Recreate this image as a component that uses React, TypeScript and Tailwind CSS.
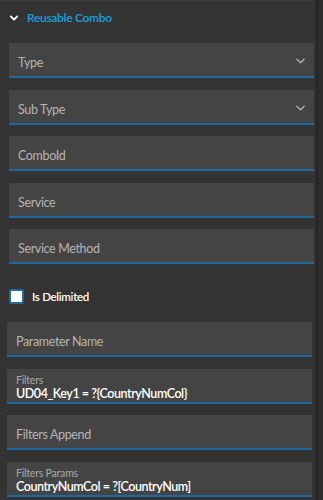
import { useState } from "react";

const font = { fontFamily: "Lato, 'Open Sans', sans-serif" };

const Chevron = ({ className, width = 1.6 }: { className?: string; width?: number }) => (
  <svg viewBox="0 0 10 6" className={className} fill="none" stroke="currentColor" strokeWidth={width} strokeLinecap="round" strokeLinejoin="round">
    <path d="M1 1l4 4 4-4" />
  </svg>
);

const Field = ({ label, value, select, className }: { label: string; value?: string; select?: boolean; className?: string }) => (
  <div className={`relative h-[35px] w-[305px] bg-[#444444] border-b-2 border-[#1d6aa0] flex flex-col justify-center px-[9px] ${className ?? ""}`}>
    {value ? (
      <>
        <div className="text-[10.5px] leading-[12px] tracking-[-0.2px] text-[#a8a8a8] mt-[5px]">{label}</div>
        <div className="text-[12.5px] leading-[16px] tracking-[-0.45px] text-white font-semibold">{value}</div>
      </>
    ) : (
      <div className="text-[12.5px] leading-[16px] tracking-[-0.35px] text-[#b4b4b4] mt-[6px]">{label}</div>
    )}
    {select && <Chevron className="absolute right-[9px] top-[15px] w-[9px] h-[6px] text-[#b0b0b0]" />}
  </div>
);

export default function App() {
  const [delimited, setDelimited] = useState(false);

  return (
    <div className="flex w-[323px] h-[500px] bg-[#333333] overflow-hidden" style={font}>
      <div className="w-[316px] border-t border-[#3b3b3b]">
        {/* header */}
        <div className="flex items-center h-[34px] pl-[10px] gap-[9px]">
          <Chevron className="w-[8px] h-[6px] text-white" width={2.4} />
          <span className="text-[12px] tracking-[-0.3px] font-semibold text-[#1ba0e0]">Reusable Combo</span>
        </div>

        <div className="ml-[9px] mt-[8px]">
          <Field label="Type" select />
          <Field label="Sub Type" select className="mt-[12px]" />
          <Field label="ComboId" className="mt-[11px]" />
          <Field label="Service" className="mt-[12px]" />
          <Field label="Service Method" className="mt-[11px]" />
        </div>

        <label className="flex items-center gap-[8px] ml-[9px] mt-[25px] h-[15px] cursor-pointer">
          <input type="checkbox" checked={delimited} onChange={() => setDelimited(!delimited)} className="hidden" />
          <span className="w-[15px] h-[15px] bg-white border-2 border-[#1d6aa0] rounded-[2px]" />
          <span className="text-[11.5px] tracking-[-0.3px] font-semibold text-white">Is Delimited</span>
        </label>

        <div className="ml-[7px] mt-[18px]">
          <Field label="Parameter Name" />
          <Field label="Filters" value="UD04_Key1 = ?{CountryNumCol}" className="mt-[12px]" />
          <Field label="Filters Append" className="mt-[11px]" />
          <Field label="Filters Params" value="CountryNumCol = ?[CountryNum]" className="mt-[12px]" />
        </div>
      </div>
      <div className="w-[1px] bg-[#1e1e1e]" />
      <div className="flex-1 bg-[#2c2c2c]" />
    </div>
  );
}
